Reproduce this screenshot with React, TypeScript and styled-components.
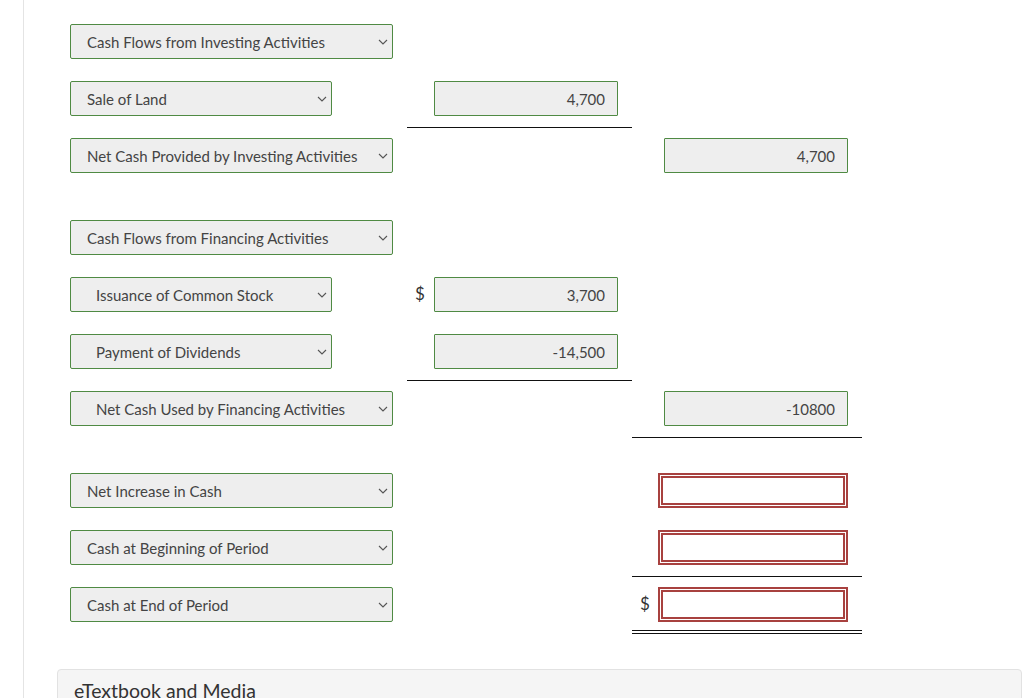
import React from "react";
import styled, { createGlobalStyle } from "styled-components";

const Global = createGlobalStyle`
  html, body { margin: 0; padding: 0; background: #ffffff; }
  body { font-family: Lato, "Open Sans", "Liberation Sans", sans-serif; color: #333; overflow: hidden; }
`;

const Page = styled.div`
  margin-left: 23px;
  border-left: 1px solid #e4e4e4;
  min-height: 698px;
  padding-top: 24px;
  box-sizing: border-box;
`;

const Sheet = styled.div`
  padding-left: 46px;
`;

const Group = styled.div`
  margin-bottom: 35px;
`;

const Row = styled.div`
  display: grid;
  grid-template-columns: 337px 225px 230px;
  height: 47px;
  margin-bottom: 10px;
`;

const SelectWrap = styled.div<{ $wide: boolean }>`
  position: relative;
  width: ${(p) => (p.$wide ? 323 : 262)}px;
  height: 35px;
`;

const Select = styled.select<{ $indent: boolean }>`
  appearance: none;
  -webkit-appearance: none;
  width: 100%;
  height: 100%;
  box-sizing: border-box;
  border: 1px solid #4f8a43;
  border-radius: 2px;
  background: #eeeeee;
  font-family: Lato, "Open Sans", "Liberation Sans", sans-serif;
  font-size: 15px;
  color: #444;
  padding: 0 20px 0 ${(p) => (p.$indent ? 25 : 16)}px;
  outline: none;
`;

const Chevron = styled.svg`
  position: absolute;
  right: 5px;
  top: 15px;
  width: 10px;
  height: 6px;
  pointer-events: none;
`;

const Cell = styled.div<{ $line?: "single" | "double" }>`
  display: flex;
  align-items: flex-start;
  justify-content: space-between;
  box-sizing: border-box;
  height: 47px;
  padding: 0 14px 0 8px;
  border-bottom: ${(p) =>
    p.$line === "single" ? "1px solid #111" : p.$line === "double" ? "4px double #111" : "none"};
`;

const Dollar = styled.span`
  height: 35px;
  line-height: 33px;
  font-size: 17px;
  color: #333;
`;

const Amount = styled.input`
  width: 184px;
  height: 35px;
  box-sizing: border-box;
  border: 1px solid #4f8a43;
  border-radius: 1px;
  background: #eeeeee;
  text-align: right;
  padding: 0 12px 0 8px;
  font-family: Lato, "Open Sans", "Liberation Sans", sans-serif;
  font-size: 15px;
  color: #444;
  outline: none;
`;

const Blank = styled.input`
  width: 190px;
  height: 35px;
  box-sizing: border-box;
  border: 5px double #a8413f;
  background: #ffffff;
  outline: none;
`;

const Panel = styled.div`
  margin: 0 2px 0 33px;
  border: 1px solid #e2e2e2;
  border-radius: 4px 4px 0 0;
  background: #f5f5f5;
  padding: 9px 16px 0;
  height: 40px;
  font-size: 19.5px;
  color: #333;
`;

type Field =
  | { kind: "amount"; value: string; dollar?: boolean }
  | { kind: "blank"; dollar?: boolean };

type RowDef = {
  label: string;
  wide: boolean;
  indent?: boolean;
  c1?: Field;
  c2?: Field;
  line1?: "single" | "double";
  line2?: "single" | "double";
};

const groups: RowDef[][] = [
  [
    { label: "Cash Flows from Investing Activities", wide: true },
    { label: "Sale of Land", wide: false, c1: { kind: "amount", value: "4,700" }, line1: "single" },
    { label: "Net Cash Provided by Investing Activities", wide: true, c2: { kind: "amount", value: "4,700" } },
  ],
  [
    { label: "Cash Flows from Financing Activities", wide: true },
    { label: "Issuance of Common Stock", wide: false, indent: true, c1: { kind: "amount", value: "3,700", dollar: true } },
    { label: "Payment of Dividends", wide: false, indent: true, c1: { kind: "amount", value: "-14,500" }, line1: "single" },
    { label: "Net Cash Used by Financing Activities", wide: true, indent: true, c2: { kind: "amount", value: "-10800" }, line2: "single" },
  ],
  [
    { label: "Net Increase in Cash", wide: true, c2: { kind: "blank" } },
    { label: "Cash at Beginning of Period", wide: true, c2: { kind: "blank" }, line2: "single" },
    { label: "Cash at End of Period", wide: true, c2: { kind: "blank", dollar: true }, line2: "double" },
  ],
];

function FieldCell({ field, line }: { field?: Field; line?: "single" | "double" }) {
  return (
    <Cell $line={line}>
      {field ? <Dollar>{field.dollar ? "$" : ""}</Dollar> : null}
      {field?.kind === "amount" ? <Amount readOnly value={field.value} /> : null}
      {field?.kind === "blank" ? <Blank readOnly value="" /> : null}
    </Cell>
  );
}

export default function App() {
  return (
    <>
      <Global />
      <Page>
        <Sheet>
          {groups.map((g, gi) => (
            <Group key={gi}>
              {g.map((r) => (
                <Row key={r.label}>
                  <div>
                    <SelectWrap $wide={r.wide}>
                      <Select $indent={!!r.indent} defaultValue={r.label}>
                        <option>{r.label}</option>
                      </Select>
                      <Chevron viewBox="0 0 10 6">
                        <path d="M1 1 L5 5 L9 1" fill="none" stroke="#555" strokeWidth="1.1" />
                      </Chevron>
                    </SelectWrap>
                  </div>
                  <FieldCell field={r.c1} line={r.line1} />
                  <FieldCell field={r.c2} line={r.line2} />
                </Row>
              ))}
            </Group>
          ))}
        </Sheet>
        <Panel>eTextbook and Media</Panel>
      </Page>
    </>
  );
}
